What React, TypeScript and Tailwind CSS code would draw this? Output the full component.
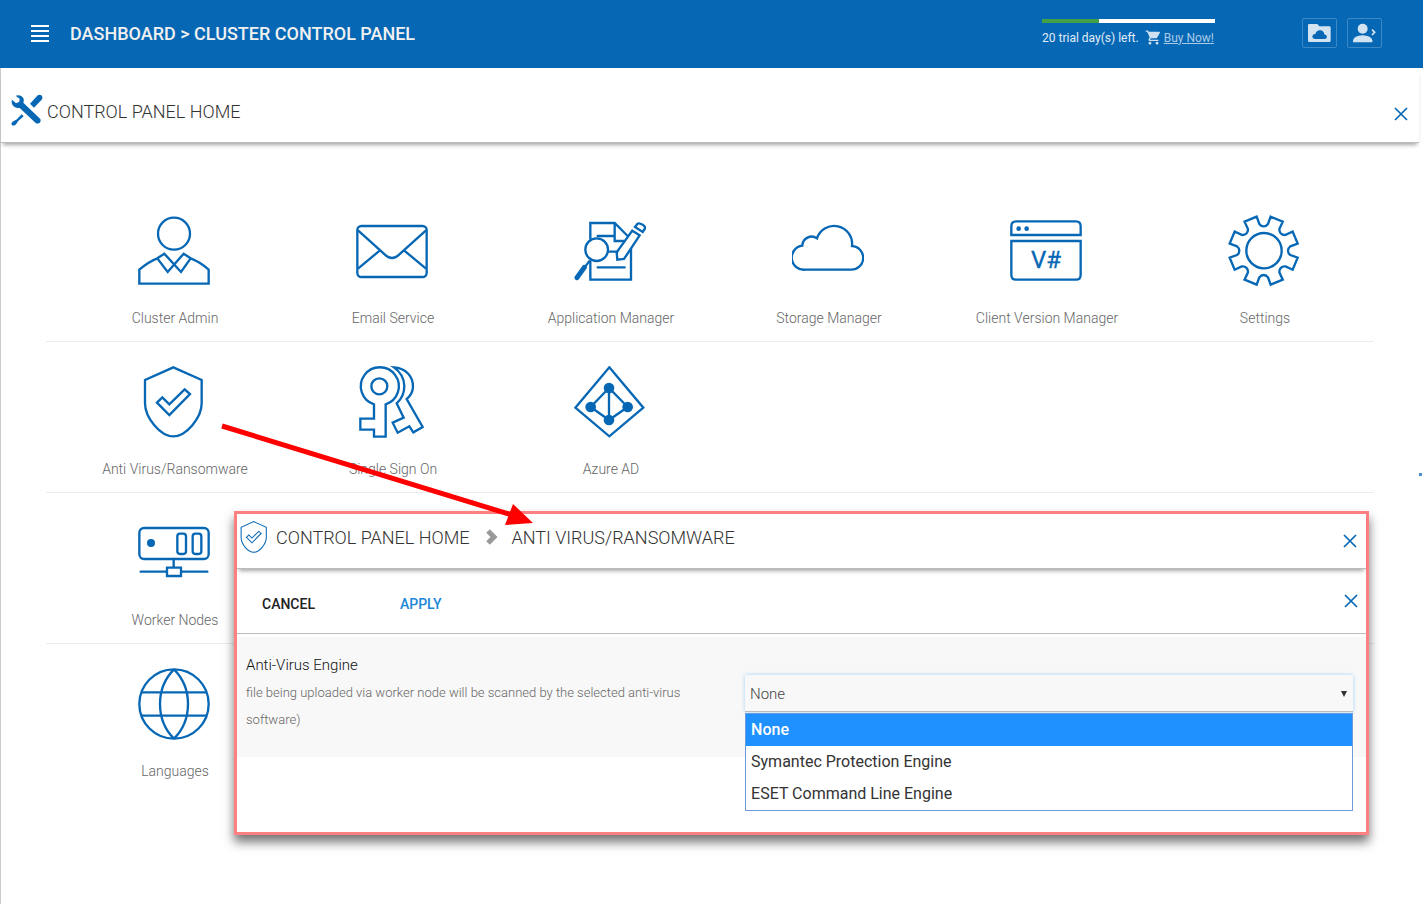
import { useState } from 'react'
import type { ReactNode } from 'react'
import { MdShoppingCart } from 'react-icons/md'
import { clsx } from 'clsx'

interface PanelItem {
  label: string
  icon: ReactNode
}

/** Shared frame for the outlined panel icons */
function LineIcon({ className = 'mr-[2px] size-[72px]', children }: { className?: string; children: ReactNode }) {
  return (
    <svg
      viewBox="0 0 216 216"
      fill="none"
      stroke="currentColor"
      strokeWidth="7"
      className={clsx('shrink-0 text-[#0667b5]', className)}
      aria-hidden="true"
    >
      {children}
    </svg>
  )
}

const shield = (
  <>
    <path d="M106 4 191 42V112C191 155 145 211 106 211S21 155 21 112V42Z" />
    <path d="M57 110 73 94 94 115 140 70 156 84 94 147Z" />
  </>
)

// one valley of the gear, repeated every 45 degrees
function gearPath() {
  const points = [
    [-21, -102],
    [-13, -80],
    [-8, -73],
    [0, -73],
    [8, -73],
    [13, -80],
    [21, -102],
  ]
  let d = ''
  for (let i = 0; i < 8; i++) {
    const a = (i * Math.PI) / 4
    const [p0, p1, p2, p3, p4, p5, p6] = points.map(([x, y]) => {
      const px = 107 + x * Math.cos(a) - y * Math.sin(a)
      const py = 107 + x * Math.sin(a) + y * Math.cos(a)
      return `${px.toFixed(1)} ${py.toFixed(1)}`
    })
    d += `${i === 0 ? 'M' : 'L'}${p0}L${p1}Q${p2} ${p3}Q${p4} ${p5}L${p6}`
  }
  return d + 'Z'
}

const rows: PanelItem[][] = [
  [
    {
      label: 'Cluster Admin',
      icon: (
        <LineIcon>
          <circle cx="108" cy="56" r="48" />
          <path d="M4 206V164C20 150 40 137 58 130L79 116 129 171 158 130C176 137 197 150 212 164V206Z" />
          <path d="M158 130 137 116 89 171 58 130" />
        </LineIcon>
      ),
    },
    {
      label: 'Email Service',
      icon: (
        <LineIcon>
          <rect x="4" y="33" width="208" height="153" rx="12" />
          <path d="M6 46 86 118Q108 140 130 118L210 46M6 161 72 106M210 161 144 106" />
        </LineIcon>
      ),
    },
    {
      label: 'Application Manager',
      icon: (
        <LineIcon>
          <path d="M49 74V24H122L161 63M122 24V78H152M171 100V194H49V136" />
          <path d="M71 63H118M103 110H130M71 157H152" strokeLinecap="round" />
          <circle cx="68" cy="104" r="34" />
          <path d="M175 47 197 61 150 132 130 134 128 112Z" />
          <path d="M183 36 190 27Q194 22 206 29 216 36 212 42L206 51Z" />
          <path d="M47 137 32 157" />
          <path d="M31 157 9 188" strokeWidth="15" strokeLinecap="round" />
        </LineIcon>
      ),
    },
    {
      label: 'Storage Manager',
      icon: (
        <LineIcon>
          <path d="M40 164H176A35 35 0 0 0 180 93A54 54 0 0 0 75 70A28 28 0 0 0 31 92A36 36 0 0 0 40 164Z" />
        </LineIcon>
      ),
    },
    {
      label: 'Client Version Manager',
      icon: (
        <LineIcon>
          <path d="M4 60V34Q4 19 18 19H198Q212 19 212 34V60ZM4 78H212V179Q212 194 198 194H18Q4 194 4 179Z" />
          <circle cx="26" cy="41" r="7" fill="currentColor" stroke="none" />
          <circle cx="50" cy="41" r="7" fill="currentColor" stroke="none" />
          <text
            x="108"
            y="160"
            textAnchor="middle"
            fill="currentColor"
            stroke="currentColor"
            strokeWidth="1"
            className="font-[Roboto,sans-serif] text-[72px]"
          >
            V#
          </text>
        </LineIcon>
      ),
    },
    {
      label: 'Settings',
      icon: (
        <LineIcon>
          <path d={gearPath()} />
          <circle cx="108" cy="107" r="53" />
        </LineIcon>
      ),
    },
  ],
  [
    { label: 'Anti Virus/Ransomware', icon: <LineIcon>{shield}</LineIcon> },
    {
      label: 'Single Sign On',
      icon: (
        <LineIcon>
          <circle cx="70" cy="61" r="24" />
          <path d="M54 115V158H13V191H54V212H89V115A57 57 0 1 0 54 115Z" />
          <path d="M114 4C150 6 171 32 171 62Q170 85 152 99L200 183 172 199 160 181 125 200 110 170 143 155 122 112Q145 92 145 60 144 25 114 4Z" />
        </LineIcon>
      ),
    },
    {
      label: 'Azure AD',
      icon: (
        <LineIcon>
          <path d="M106 4 208 125 106 211 4 125Z" />
          <path d="M105 66 50 123 105 162 161 123ZM105 66V162" />
          <g fill="currentColor" stroke="none">
            <circle cx="105" cy="66" r="16" />
            <circle cx="50" cy="123" r="16" />
            <circle cx="161" cy="123" r="16" />
            <circle cx="105" cy="162" r="16" />
          </g>
        </LineIcon>
      ),
    },
  ],
  [
    {
      label: 'Worker Nodes',
      icon: (
        <LineIcon>
          <rect x="4" y="33" width="208" height="93" rx="14" />
          <rect x="118" y="50" width="26" height="61" rx="8" />
          <rect x="164" y="50" width="26" height="61" rx="8" />
          <circle cx="39" cy="78" r="12" fill="currentColor" stroke="none" />
          <path d="M107 126V152M87 152H129V177H87ZM8 164H87M129 164H208" strokeLinecap="round" />
        </LineIcon>
      ),
    },
  ],
  [
    {
      label: 'Languages',
      icon: (
        <LineIcon>
          <circle cx="108" cy="108" r="104" />
          <path d="M10 73H206M10 143H206M108 4C52 60 52 156 108 212M108 4C164 60 164 156 108 212" />
        </LineIcon>
      ),
    },
  ],
]

const engines = ['None', 'Symantec Protection Engine', 'ESET Command Line Engine']

function CloseButton({ label }: { label: string }) {
  return (
    <button type="button" aria-label={label} className="cursor-pointer text-[#0667b5]">
      <svg viewBox="0 0 14 14" fill="none" stroke="currentColor" strokeWidth="1.7" className="size-[14px]">
        <path d="M1 1 13 13M13 1 1 13" />
      </svg>
    </button>
  )
}

function TopBar() {
  return (
    <header className="flex h-[68px] items-center bg-[#0667b5] pr-[41px] pb-[2px] pl-[31px] text-[#f0f0f0]">
      <button type="button" aria-label="Menu" className="flex w-[18px] flex-col gap-[3px]">
        <span className="h-[2px] w-full bg-white" />
        <span className="h-[2px] w-full bg-white" />
        <span className="h-[2px] w-full bg-white" />
        <span className="h-[2px] w-full bg-white" />
      </button>
      <h1 className="ml-[21px] text-[18px] font-medium">DASHBOARD &gt; CLUSTER CONTROL PANEL</h1>

      <div className="ml-auto w-[173px] pb-[1px]">
        <div className="h-[4px] bg-white">
          <div className="h-full w-[33%] bg-[#43a047]" />
        </div>
        <div className="mt-[6px] flex h-[18px] items-center text-[12px] whitespace-nowrap text-[#e2edf6]">
          <span>20 trial day(s) left.</span>
          <MdShoppingCart className="ml-[6px] size-[17px] text-[#cfe1f0]" />
          <a href="#buy" className="ml-[2px] text-[#a9cbe6] underline">
            Buy Now!
          </a>
        </div>
      </div>

      <div className="ml-[87px] flex gap-[10px] text-[#d2e3f1]">
        <button
          type="button"
          aria-label="Cloud folder"
          className="flex h-[30px] w-[35px] items-center justify-center rounded-[2px] border border-[#3c88c5]"
        >
          <svg viewBox="0 0 69 54" className="h-[18px] w-[23px]">
            <path d="M0 4Q0 0 4 0H28L34 7H64Q68 7 68 11V50Q68 54 64 54H4Q0 54 0 50Z" fill="currentColor" />
            <path
              d="M22 45Q13 45 13 37 14 30 22 30 26 18 37 19 47 20 49 31 57 33 57 39 56 45 50 45Z"
              fill="#0667b5"
            />
          </svg>
        </button>
        <button
          type="button"
          aria-label="Account"
          className="flex h-[30px] w-[35px] items-center justify-center rounded-[2px] border border-[#3c88c5]"
        >
          <svg viewBox="0 0 69 60" className="h-[20px] w-[23px]">
            <circle cx="29" cy="17" r="15" fill="currentColor" />
            <path d="M0 58V52Q3 38 29 37 55 38 58 52V58Z" fill="currentColor" />
            <path d="M57 20 65 28 57 36" fill="none" stroke="currentColor" strokeWidth="5" />
          </svg>
        </button>
      </div>
    </header>
  )
}

function PanelCell({ item }: { item: PanelItem }) {
  return (
    <li>
      <a href="#panel" className="flex flex-col items-center pt-[24px] pb-[12px]">
        {item.icon}
        <span className="mt-[20px] text-[14px] leading-[22px] font-light text-[#666]">{item.label}</span>
      </a>
    </li>
  )
}

function AntiVirusPanel() {
  const [engine, setEngine] = useState('None')
  const [open, setOpen] = useState(true)

  return (
    <section className="absolute top-[511px] right-[54px] left-[234px] border-3 border-[#ff8080] bg-white shadow-[0_7px_10px_rgba(0,0,0,0.55)]">
      <div className="flex h-[55px] items-center border-b border-[#bbb] pr-[9px] pl-[1px] shadow-[0_4px_4px_-2px_rgba(0,0,0,0.35)]">
        <LineIcon className="mb-[9px] size-[32px]">{shield}</LineIcon>
        <h2 className="ml-[6px] flex items-center pb-[8px] text-[18px] font-light text-[#333]">
          CONTROL PANEL HOME
          <svg viewBox="0 0 12 16" fill="none" stroke="#999" strokeWidth="5" className="mr-[13px] ml-[17px] h-[16px] w-[12px]">
            <path d="M2 2 8 8 2 14" />
          </svg>
          ANTI VIRUS/RANSOMWARE
        </h2>
        <div className="ml-auto flex pb-[1px]">
          <CloseButton label="Close anti virus" />
        </div>
      </div>

      <div className="flex h-[65px] items-center border-b border-[#bbb] pt-[6px] pr-[8px] pl-[25px] text-[14px] font-medium">
        <button type="button" className="text-[#222]">
          CANCEL
        </button>
        <button type="button" className="ml-[85px] text-[#1b87d8]">
          APPLY
        </button>
        <div className="ml-auto flex pb-[6px]">
          <CloseButton label="Close settings" />
        </div>
      </div>

      <div className="mt-[3px] mb-[75px] flex h-[120px] bg-[#f8f8f8]">
        <div className="w-[45%] shrink-0 pt-[14px] pr-[48px] pl-[9px] font-light">
          <label htmlFor="engine" className="block text-[15px] leading-[28px] text-[#111]">
            Anti-Virus Engine
          </label>
          <p className="text-[13px] leading-[27px] text-[#666]">
            file being uploaded via worker node will be scanned by the selected anti-virus software)
          </p>
        </div>
        <div className="relative mt-[38px] mr-[13px] h-[37px] flex-1">
          <select
            id="engine"
            value={engine}
            onChange={(e) => setEngine(e.target.value)}
            onMouseDown={(e) => {
              e.preventDefault()
              setOpen(!open)
            }}
            className="size-full appearance-none border-b border-[#bbb] bg-[#f8f8f8] px-[5px] pt-[2px] text-[15px] font-light text-[#444] shadow-[0_0_4px_#9fd0f5] outline-none"
          >
            {engines.map((name) => (
              <option key={name}>{name}</option>
            ))}
          </select>
          <svg viewBox="0 0 6 6" className="pointer-events-none absolute top-[16px] right-[6px] size-[6px]">
            <path d="M0 0H6L3 6Z" fill="#333" />
          </svg>
          {open && (
            <ul
              role="listbox"
              aria-label="Anti-Virus Engine"
              className="absolute top-[38px] right-0 left-0 border border-[#6f9bd8] bg-white"
            >
              {engines.map((name) => (
                <li
                  key={name}
                  role="option"
                  aria-selected={name === engine}
                  onClick={() => {
                    setEngine(name)
                    setOpen(false)
                  }}
                  className={clsx(
                    'px-[5px] text-[16px] leading-[32px]',
                    name === engine ? 'bg-[#1e90ff] font-medium text-white' : 'text-[#333]',
                  )}
                >
                  {name}
                </li>
              ))}
            </ul>
          )}
        </div>
      </div>
    </section>
  )
}

export default function App() {
  return (
    <div className="relative flex min-h-screen flex-col bg-white font-[Roboto,sans-serif]">
      <TopBar />
      <main className="flex-1 border-l border-[#ccc]">
        <div className="mr-[4px] flex h-[75px] items-center border-b border-[#bbb] pr-[11px] pl-[10px] shadow-[0_4px_4px_-2px_rgba(0,0,0,0.35)]">
          <svg viewBox="0 0 96 96" className="mb-[-10px] size-[32px] text-[#0667b5]" fill="currentColor" aria-hidden="true">
            <path d="M14 5Q30 0 38 14 39 20 37 26L88 75Q91 83 84 88 78 90 74 87L26 42Q10 44 3 30 1 22 3 17L15 28 25 23 26 14Z" />
            <path d="M57 29 78 6Q84 0 91 4 97 10 92 17L69 41Z" />
            <path d="M32 61 38 67 21 82Q19 87 13 93 7 97 2 92 0 87 4 84 9 79 16 77Z" />
          </svg>
          <h2 className="ml-[4px] pt-[12px] text-[18px] font-light text-[#333]">CONTROL PANEL HOME</h2>
          <div className="ml-auto flex pt-[17px]">
            <CloseButton label="Close control panel" />
          </div>
        </div>

        <div className="mt-[48px] mr-[49px] ml-[45px]">
          {rows.map((items, i) => (
            <ul
              key={items[0].label}
              className={clsx('grid grid-cols-6 pl-[20px]', i < rows.length - 1 && 'border-b border-[#ececec]')}
            >
              {items.map((item) => (
                <PanelCell key={item.label} item={item} />
              ))}
            </ul>
          ))}
        </div>
      </main>

      <AntiVirusPanel />

      {/* pointer from the Anti Virus tile to its panel */}
      <svg
        viewBox="0 0 316 104"
        className="pointer-events-none absolute top-[422px] left-[220px] h-[104px] w-[316px]"
        aria-hidden="true"
      >
        <path d="M2 4 292 93" stroke="#f00" strokeWidth="5" />
        <path d="M293 82 313 101 285 103Z" fill="#f00" />
      </svg>
      <span className="absolute top-[473px] right-[1px] size-[3px] bg-[#4a8fca]" />
    </div>
  )
}
